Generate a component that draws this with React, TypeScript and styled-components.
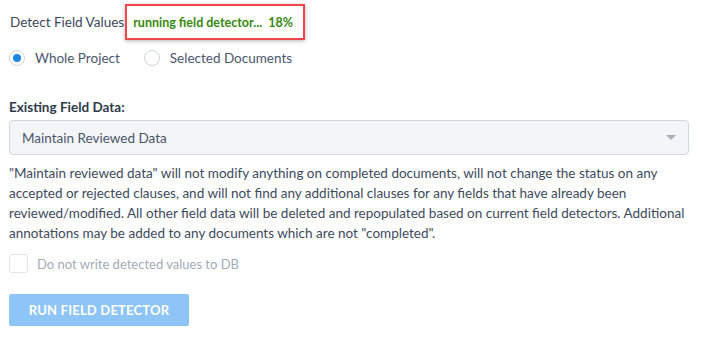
import styled, { createGlobalStyle } from "styled-components";

const GlobalStyle = createGlobalStyle`
  body {
    margin: 0;
    background: #ffffff;
    font-family: "Lato", "Noto Sans", sans-serif;
  }
`;

export default function App() {
  return (
    <>
      <GlobalStyle />
      <Container>
        <HeaderRow>
          <Title>Detect Field Values</Title>
          <StatusBox>running field detector...&nbsp; 18%</StatusBox>
        </HeaderRow>
        <RadioRow>
          <RadioOption>
            <RadioCircle $checked />
            <span>Whole Project</span>
          </RadioOption>
          <RadioOption>
            <RadioCircle />
            <span>Selected Documents</span>
          </RadioOption>
        </RadioRow>

        <Label>Existing Field Data:</Label>
        <Select>
          <span>Maintain Reviewed Data</span>
          <Caret />
        </Select>

        <Description>
          "Maintain reviewed data" will not modify anything on completed documents, will not change the
          status on any accepted or rejected clauses, and will not find any additional clauses for any
          fields that have already been reviewed/modified. All other field data will be deleted and
          repopulated based on current field detectors. Additional annotations may be added to any
          documents which are not "completed".
        </Description>

        <CheckRow>
          <CheckBox />
          <span>Do not write detected values to DB</span>
        </CheckRow>

        <RunButton disabled>Run Field Detector</RunButton>
      </Container>
    </>
  );
}

const Container = styled.div`
  padding: 4px 20px 0 9px;
  width: 680px;
  color: #3d4a5c;
`;

const HeaderRow = styled.div`
  display: flex;
  align-items: center;
  height: 36px;
`;

const Title = styled.div`
  font-size: 13.5px;
  padding-left: 1px;
  margin-right: 1px;
  color: #3a475b;
`;

const StatusBox = styled.div`
  border: 2px solid #ee474d;
  box-shadow: 0 1px 4px rgba(0, 0, 0, 0.3);
  width: 180px;
  height: 36px;
  box-sizing: border-box;
  display: flex;
  align-items: center;
  padding: 0 0 0 6px;
  color: #368a0c;
  font-weight: 700;
  font-size: 12.5px;
`;

const RadioRow = styled.div`
  display: flex;
  gap: 24px;
  margin-top: 4px;
  height: 28px;
  align-items: center;
`;

const RadioOption = styled.label`
  display: flex;
  align-items: center;
  gap: 10px;
  font-size: 13.5px;
  color: #4a566c;
`;

const RadioCircle = styled.span<{ $checked?: boolean }>`
  width: 16px;
  height: 16px;
  border-radius: 50%;
  box-sizing: border-box;
  border: 1px solid #cfd4dc;
  background: #ffffff;
  position: relative;
  &::after {
    content: "";
    display: ${(p) => (p.$checked ? "block" : "none")};
    position: absolute;
    left: 3px;
    top: 3px;
    width: 8px;
    height: 8px;
    border-radius: 50%;
    background: #1e88e5;
  }
`;

const Label = styled.div`
  margin-top: 27px;
  font-size: 13.5px;
  font-weight: 700;
  color: #2f3a4a;
`;

const Select = styled.div`
  margin-top: 5px;
  height: 35px;
  box-sizing: border-box;
  border: 1px solid #d3d7de;
  border-radius: 4px;
  background: #f4f5f9;
  display: flex;
  align-items: center;
  justify-content: space-between;
  padding: 0 12px 0 12px;
  font-size: 13.5px;
  color: #4a5568;
`;

const Caret = styled.span`
  width: 0;
  height: 0;
  border-left: 5px solid transparent;
  border-right: 5px solid transparent;
  border-top: 5px solid #a9b0bc;
`;

const Description = styled.p`
  margin: 8px 0 0;
  font-size: 13.5px;
  line-height: 20px;
  color: #3d4a5c;
`;

const CheckRow = styled.label`
  display: flex;
  align-items: center;
  gap: 9px;
  margin-top: 11px;
  font-size: 13px;
  color: #a3abb9;
`;

const CheckBox = styled.span`
  width: 19px;
  height: 19px;
  box-sizing: border-box;
  border: 1px solid #e1e4ea;
  border-radius: 3px;
  background: #ffffff;
`;

const RunButton = styled.button`
  margin-top: 21px;
  width: 180px;
  height: 32px;
  border: none;
  border-radius: 2px;
  background: #8ec5f7;
  color: #ffffff;
  font-family: inherit;
  font-weight: 700;
  font-size: 13px;
  text-transform: uppercase;
  letter-spacing: 0.2px;
`;
